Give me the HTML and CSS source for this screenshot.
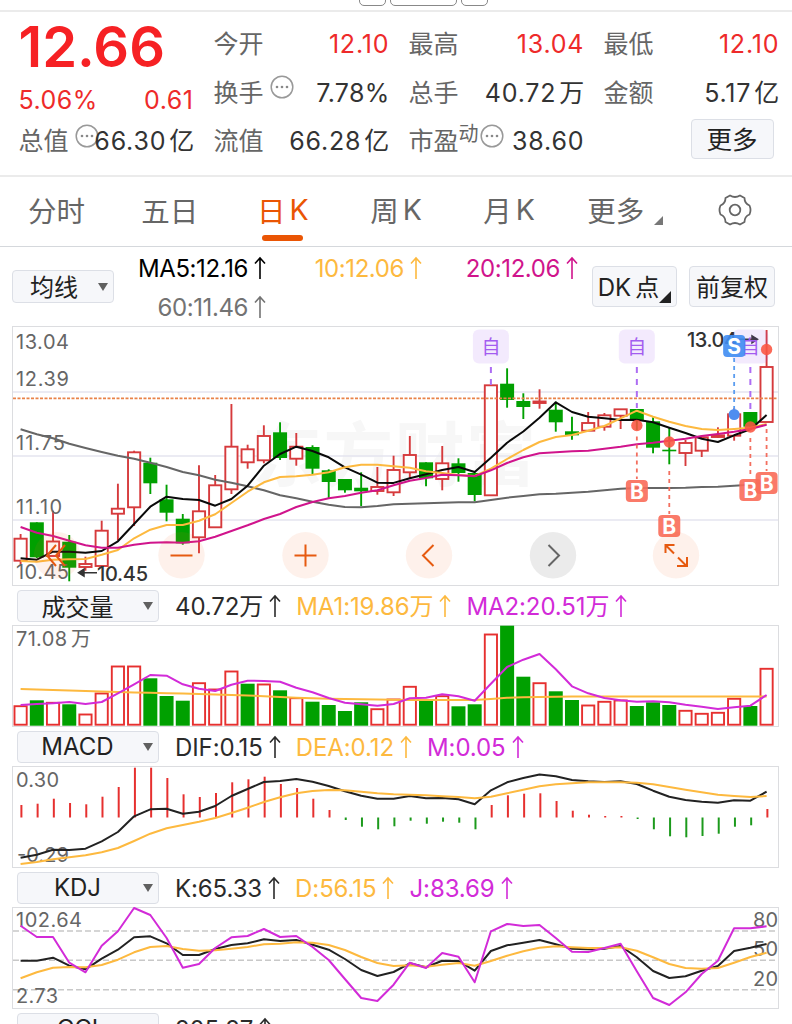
FILE: index.html
```html
<!DOCTYPE html>
<html lang="zh-CN">
<head>
    <meta charset="UTF-8">
    <meta name="viewport" content="width=device-width, initial-scale=1.0">
    <title>日K</title>
    <link rel="stylesheet" href="styles.css">
</head>
<body>
    <svg class="defs" width="0" height="0">
        <symbol id="up" viewBox="0 0 12 24">
            <path d="M6 23V2M1 7.5L6 2l5 5.500" fill="none" stroke="currentColor" stroke-width="1.6"/>
        </symbol>
        <symbol id="more" viewBox="0 0 24 24">
            <circle cx="12" cy="12" r="10.800" fill="none" stroke="#999" stroke-width="1.500"/>
            <circle cx="7" cy="12" r="1.300" fill="#888"/>
            <circle cx="12" cy="12" r="1.300" fill="#888"/>
            <circle cx="17" cy="12" r="1.300" fill="#888"/>
        </symbol>
    </svg>

    <div class="topStrip">
        <span class="chip"></span>
        <span class="chip wide"></span>
        <span class="chip"></span>
    </div>

    <div class="quote">
        <div class="col first">
            <div class="price">12.66</div>
            <div class="row red change"><span>5.06%</span><span>0.61</span></div>
            <div class="row">
                <span class="name">总值<svg class="dots over"><use href="#more"/></svg></span>
                <span class="num">66.30<i>亿</i></span>
            </div>
        </div>
        <div class="col">
            <div class="row"><span class="name">今开</span><span class="num red">12.10</span></div>
            <div class="row">
                <span class="name">换手<svg class="dots"><use href="#more"/></svg></span>
                <span class="num tight">7.78%</span>
            </div>
            <div class="row"><span class="name">流值</span><span class="num">66.28<i>亿</i></span></div>
        </div>
        <div class="col">
            <div class="row"><span class="name">最高</span><span class="num red">13.04</span></div>
            <div class="row"><span class="name">总手</span><span class="num">40.72<i>万</i></span></div>
            <div class="row">
                <span class="name">市盈<small>动</small><svg class="dots pe"><use href="#more"/></svg></span>
                <span class="num">38.60</span>
            </div>
        </div>
        <div class="col">
            <div class="row"><span class="name">最低</span><span class="num red">12.10</span></div>
            <div class="row"><span class="name">金额</span><span class="num">5.17<i>亿</i></span></div>
            <div class="row end"><button class="btn moreBtn">更多</button></div>
        </div>
    </div>

    <div class="tabs">
        <div class="tab">分时</div>
        <div class="tab">五日</div>
        <div class="tab active">日<b>K</b></div>
        <div class="tab">周<b>K</b></div>
        <div class="tab">月<b>K</b></div>
        <div class="tab moreTab">更多<svg class="corner" viewBox="0 0 9 9"><path d="M9 0v9H0z" fill="#777"/></svg></div>
        <div class="tab">
            <svg class="gear" viewBox="0 0 34 32" fill="none" stroke="#666" stroke-width="1.800">
                <path d="M12 1.500Q17 4.500 22 1.500L26.500 4Q26.500 9.500 31.500 11.500Q33.500 16 31.500 20.500Q26.500 22.500 26.500 28L22 30.500Q17 27.500 12 30.500L7.500 28Q7.500 22.500 2.500 20.500Q0.500 16 2.500 11.500Q7.500 9.500 7.500 4Z" stroke-linejoin="round"/>
                <circle cx="17" cy="16" r="5.300"/>
            </svg>
        </div>
    </div>

    <div class="average">
        <button class="btn select maSelect"><span>均线</span><em></em></button>
        <div class="values">
            <span class="black">MA5:12.16<svg class="up"><use href="#up"/></svg></span>
            <span class="orange">10:12.06<svg class="up"><use href="#up"/></svg></span>
            <span class="pink">20:12.06<svg class="up"><use href="#up"/></svg></span>
            <span class="gray">60:11.46<svg class="up"><use href="#up"/></svg></span>
        </div>
        <button class="btn dk"><span>DK<i>点</i></span><svg class="dkCorner" viewBox="0 0 12 12"><path d="M12 0v12H0z" fill="#222"/></svg></button>
        <button class="btn fq"><span>前复权</span></button>
    </div>

    <svg class="chart kline" id="kline" viewBox="12 326 767 260"></svg>

    <div class="legend">
        <button class="btn select"><span>成交量</span><em></em></button>
        <span class="dark">40.72万<svg class="up"><use href="#up"/></svg></span>
        <span class="orange">MA1:19.86万<svg class="up"><use href="#up"/></svg></span>
        <span class="purple">MA2:20.51万<svg class="up"><use href="#up"/></svg></span>
    </div>
    <svg class="chart sub" id="volume" viewBox="12 625 767 102"></svg>

    <div class="legend">
        <button class="btn select"><span>MACD</span><em></em></button>
        <span class="dark">DIF:0.15<svg class="up"><use href="#up"/></svg></span>
        <span class="orange">DEA:0.12<svg class="up"><use href="#up"/></svg></span>
        <span class="purple">M:0.05<svg class="up"><use href="#up"/></svg></span>
    </div>
    <svg class="chart sub" id="macd" viewBox="12 766 767 102"></svg>

    <div class="legend">
        <button class="btn select"><span>KDJ</span><em></em></button>
        <span class="dark">K:65.33<svg class="up"><use href="#up"/></svg></span>
        <span class="orange">D:56.15<svg class="up"><use href="#up"/></svg></span>
        <span class="purple">J:83.69<svg class="up"><use href="#up"/></svg></span>
    </div>
    <svg class="chart sub" id="kdj" viewBox="12 907 767 102"></svg>

    <div class="legend">
        <button class="btn select"><span>CCI</span><em></em></button>
        <span class="dark">205.27<svg class="up"><use href="#up"/></svg></span>
    </div>

    <script src="chart.js"></script>
</body>
</html>
```
FILE: styles.css
```css
* {
    box-sizing: border-box;
}
body {
    margin: 0;
    width: 792px;
    height: 1024px;
    overflow: hidden;
    background: #fff;
    color: #333;
    font-family: Inter, "Noto Sans CJK SC", sans-serif;
    font-size: 25px;
}
i, em {
    font-style: normal;
}
b {
    font-weight: inherit;
}
.defs {
    position: absolute;
}
.red { color: #ee2a2a; }
.black { color: #000; }
.dark { color: #2b2b2b; }
.gray { color: #737373; }
.orange { color: #fdb93f; }
.pink { color: #d0148c; }
.purple { color: #d22bd8; }

.topStrip {
    display: flex;
    gap: 4px;
    height: 12px;
    padding-left: 359px;
    border-bottom: 2px solid #ebebeb;
    overflow: hidden;
}
.chip {
    width: 27px;
    height: 16px;
    margin-top: -10px;
    border: 1px solid #888;
    border-radius: 5px;
}
.chip.wide {
    width: 67px;
}

.quote {
    display: grid;
    grid-template-columns: repeat(4, 175px);
    column-gap: 20px;
    height: 163px;
    padding: 8px 0 0 18.500px;
}
.row {
    display: flex;
    justify-content: space-between;
    align-items: center;
    height: 48.500px;
    line-height: 48px;
    white-space: nowrap;
}
.row i {
    margin-left: 3px;
    letter-spacing: 0;
}
.row.end {
    justify-content: flex-end;
}
.num {
    letter-spacing: 0.8px;
    margin-right: -0.800px;
}
.num.tight {
    letter-spacing: 0.3px;
    margin-right: -1px;
}
.name {
    display: flex;
    color: #666;
    align-items: center;
}
.name small {
    align-self: flex-start;
    font-size: 20px;
    line-height: 34px;
}
.row.change {
    height: 40px;
    padding-top: 5px;
    line-height: 36px;
    letter-spacing: 0.5px;
}
.price {
    height: 57px;
    color: #f62124;
    font-size: 56px;
    font-weight: 600;
    line-height: 55px;
}
.dots {
    width: 24px;
    height: 24px;
    margin: -11px 0 0 6px;
}
.dots.over {
    margin-right: -30px;
}
.dots.pe {
    margin-left: 1px;
}

.btn {
    display: flex;
    flex: none;
    align-items: center;
    justify-content: center;
    padding: 0;
    border: 1px solid #dcdfe6;
    border-radius: 4px;
    background: #f6f7fa;
    color: #222;
    font-family: inherit;
    font-size: 24px;
    white-space: nowrap;
}
.btn span {
    margin-top: -2px;
}
.moreBtn {
    width: 83px;
    height: 40px;
    margin: -5px 5px 0 0;
    padding-bottom: 3px;
    font-size: 25.500px;
}

.tabs {
    display: grid;
    grid-template-columns: repeat(7, 1fr);
    height: 72px;
    border-top: 2px solid #ebebeb;
    border-bottom: 1px solid #d5d8dc;
}
.tab {
    position: relative;
    display: flex;
    align-items: center;
    justify-content: center;
    padding-bottom: 4px;
    color: #666;
    font-size: 28.500px;
}
.tab b {
    margin-left: 4px;
}
.tab.active {
    color: #ea5504;
}
.tab.active::after {
    content: "";
    position: absolute;
    bottom: 5px;
    width: 41px;
    height: 6px;
    border-radius: 3px;
    background: #ea5504;
}
.moreTab {
    padding-left: 6px;
}
.corner {
    width: 9px;
    height: 9px;
    margin: 22px 0 0 10px;
}
.gear {
    width: 34px;
    height: 32px;
}

.average {
    display: flex;
    align-items: flex-start;
    height: 79px;
    padding-left: 12px;
}
.select span {
    flex: 1;
    text-align: center;
    padding-right: 6px;
}
.select em {
    border: 5px solid transparent;
    border-top: 8px solid #606060;
    border-bottom: 0;
    margin-right: 5px;
}
.maSelect {
    width: 102px;
    height: 33px;
    margin-top: 23px;
}
.maSelect span {
    padding-right: 3px;
}
.values {
    display: grid;
    flex: none;
    grid-template-columns: 128px 156px 156px;
    width: 478px;
    padding: 3px 0 0 24px;
    font-size: 24px;
    letter-spacing: -0.400px;
    line-height: 38.500px;
    white-space: nowrap;
    justify-items: end;
}
.up {
    width: 12px;
    height: 24px;
    margin-left: 6px;
    vertical-align: -3px;
}
.dk {
    position: relative;
    width: 85px;
    height: 41px;
    margin-top: 19px;
    padding-right: 12px;
}
.dk i {
    margin-left: 4px;
}
.dkCorner {
    position: absolute;
    right: 5px;
    bottom: 3px;
    width: 12px;
    height: 12px;
}
.fq {
    width: 86px;
    height: 41px;
    margin: 19px 0 0 12px;
}

.chart {
    display: block;
    width: 767px;
    margin-left: 12px;
}
.kline {
    height: 260px;
}
.sub {
    height: 102px;
}
.legend {
    display: flex;
    align-items: flex-start;
    gap: 15px;
    height: 39px;
    padding: 4px 0 0 17px;
    font-size: 24px;
    letter-spacing: -0.100px;
    line-height: 34px;
    white-space: nowrap;
}
.legend .btn {
    width: 142px;
    height: 32px;
    margin-right: 1px;
}
.axis {
    fill: #666;
    font-size: 20px;
}
.note {
    fill: #333;
    font-size: 20px;
    font-weight: 500;
}
.watermark {
    fill: #f7f7f7;
    font-size: 70px;
    font-weight: 700;
}
.own {
    fill: #a35cf0;
    font-size: 19px;
}
.flag {
    fill: #fff;
    font-size: 21px;
    font-weight: 700;
    text-anchor: middle;
}
```
FILE: chart.js
```js
const RED = '#d63a3c', VOL_RED = '#e6302f', GREEN = '#00a000';
const ORANGE = '#fdb93f', PURPLE = '#d22bd8', PINK = '#d0148c';
const x = i => 20.6 + i * 16.217;

// colour, body top, body bottom, high, low
const candles = [
    ['r',538.7,560.7,534,564],['g',522.3,557.3,522.3,558],['r',541.5,556,510.7,556],['g',541.7,567.7,535,581.3],
    ['r',564,567,556.7,570.7],['r',530.7,566,520.7,566],['r',508.7,513.7,483.7,540.3],['r',452.3,507.3,450.7,526],
    ['g',462.7,483.3,457.7,494],['g',499.3,512.7,484.7,521.3],['g',518.7,543.3,514,544.7],['r',511.3,537.3,465.3,553.3],
    ['r',485.3,527.3,475,527.3],['r',446.7,489.3,404,494],['r',449.3,462.3,444.7,468.7],['r',436,460.3,425.3,463.3],
    ['g',432.3,458,422.3,460],['r',446.7,458.7,433,465.7],['g',447,468.7,445.3,474],['g',470.3,482,469.3,498],
    ['g',479,490.3,479,492.7],['g',487.7,491.3,472.3,506],['r',487,491,467,494.7],['r',470,492.3,455.7,496],
    ['r',455,472.3,436,478],['g',462.3,478.3,462.3,486.3],['r',463.3,479,446,490.3],['g',463.3,473,458.3,481.7],
    ['g',473,495,472.3,501.3],['r',385.3,495.3,385.3,495.3],['g',383.7,400,368.3,407.7],['g',401,407,393.3,419],
    ['r',401.500,403,389.3,408.7],['g',409.7,422.3,401.7,431.7],['g',431.3,435.3,416.7,439.7],['r',423,430.7,412,430.7],
    ['r',415.3,426.7,413,430.7],['r',409.3,415.7,409.3,429],['g',409,420,409,430],['g',421.3,447.7,417.3,453.3],
    ['g',449.7,451.3,427.7,464.3],['r',443,453,440,466],['r',437.3,450.7,437.3,457],['r',435.3,437,427.3,438],
    ['r',414.3,435.7,408,440.7],['g',412,426.7,412,426.7],['r',367,422,330,422]
];
const ma5 = [558.3,559.7,551.7,551.7,552.7,551,541.3,524,506.7,496.7,499,500,505.7,499,485.7,465.7,454,446.7,451,457.3,467.3,474.7,482.7,482.9,478.3,474.3,470,467,472,457.7,442.7,431.5,417.7,402.3,412,416.7,418.3,420,419.7,422.3,427.7,433,438.7,442,435.3,429.3,415];
const ma10 = [561,561.7,559.7,559.3,559,554.7,550,538.3,529.7,525,525,520.7,514.3,503,491.7,482.3,477,476.3,474.7,472.3,467.3,464.7,464.7,466.3,467.7,471.3,473,475,476,468.7,459,450,442,437,435,430.7,426,418.3,410.7,416.7,421.7,426,429,430,429,427.7,424];
const ma20 = [527,532.7,536,540.7,545.3,547.7,547.7,544.7,542.7,542.3,542.7,541.3,536.7,531,525.3,519,514,507,502,498.3,496,492.7,490.3,485.3,480.7,478,474.7,475.3,476.3,470.3,463,457.3,453.3,452.3,451.3,450.7,448.7,446.7,444.3,442.7,440.7,438.7,436,434,431.7,429,424.7];
const ma60 = [429.3,434.3,438.3,443.7,448,452,455.7,458.7,462.7,467,472,475.3,479.7,482.7,486.3,490.3,495.3,498.3,501.7,504.7,507,507.3,506,504.3,503.7,503.3,502.7,502.3,502.3,500,497.7,496,494.3,493.7,492.7,491.7,490.3,488.7,488,488,488,487.7,487,486.7,485.7,484.7,482];

const volColors = 'rgrgrrrrgggrrrgrgrggggrrrgrggrggrggrrrgggrrrrgr';
const vol = [705.7,700.3,702.3,704.3,714,693,666,666,678.3,696,700.7,682.7,689,671,683.7,684,690.3,697.7,701.7,705,711,702.3,708.7,699,686.3,700.3,695.7,706.3,704.3,634,625.7,676.7,682.7,691.3,700,705,701.3,700,706,702.3,705,710.3,713.3,712.3,698.3,706,668.3];
const volMa2 = [705,704,703.3,702,704,702,693.3,684.3,675,675.7,684.3,688.7,691,684.7,680.7,681,681.7,687.7,692.3,698,702.7,704.3,705.7,704,698.3,697.7,694.3,696.3,700.7,683.7,667,659.7,654,669.3,686.3,693.3,698,700.3,701.7,701.3,702.3,704.7,706.7,709,707.3,705.7,695];
const volMa1 = [689,689.5,690,690.5,691,691.5,692,692.4,692.8,693.2,693.6,694,694.5,695,695.5,696.2,697,697.7,698.3,698.7,699,699.2,699.5,699.8,700,700,700,700,700,699,697.7,697.3,697,696.7,696.5,696.5,696.5,696.5,696.5,696.5,696.5,696.5,696.5,696.5,696.5,696.5,696.5];

const bars = [805,803.7,798.7,803,804.3,796.7,787,767.7,767.7,778,794.3,797,793,782.3,779.3,776.7,784,788,798.7,810,820,826.7,829.3,826.3,820.7,823.7,821.7,822.7,829.3,805,795.3,793.7,793.3,801,810.7,814.7,816,816,819,829.3,836.3,837.3,836,833.7,826.7,825.3,809];
const dif = [857.7,854.7,849.7,850,848.7,841.3,832,816.3,809.3,808.7,813.7,811.7,806,796,789,782,781,779,781.7,786,791.3,795.7,798.7,798.7,796,798.3,798,799.3,804.3,790.3,782.3,778,774.5,776.3,780,781.3,782,781.3,784,790.7,796.7,800,801.7,802.7,800.3,800.7,791.7];
const dea = [864,862,859.3,857.3,855.3,852.3,848,841,833.7,828.3,825,821.7,818,813,807.7,802,797.3,793.3,791,790,790.3,791.7,793.3,794.3,794.7,795.3,796.3,797,798.3,796.7,793.3,789.7,786.3,784.3,783.3,782.3,782.3,782.3,782.7,784.3,787,789.7,792.3,794.7,796,797,796];

const k = [960.7,960.7,957.7,965.7,969.3,958.7,949.7,937.3,936.3,943.3,955,955,949,945,943.3,939.3,941,940,944.7,949.7,959,970,976,972,963.3,967.3,960.7,961,970.7,951,945.3,942.7,940,944.3,948.7,949.3,948.7,946,957.3,971,978,976.3,970.7,966,951,947.7,944];
const d = [978.3,972.3,967.7,967,967.3,965,959.7,952.3,947,946,949,950.7,950.3,948.7,947,944.3,943.7,942.3,942.7,945,950,957,963,966,965.3,966.7,964.7,963,965.7,961,955.7,951.3,947.7,946.3,947.3,948,948,947.3,950.7,957.3,964,968,968.7,968,962.7,957,952.7];
const j = [925.7,937,937,962.7,972.3,945.7,931.3,908,915,938,967.7,964,948,937.3,936,929,937,936,947,960,979,998,1001,984.7,962.7,968,953,956.7,982.3,931.3,924,926,925,938,951.7,952,948,943.7,971.3,998,1005,992.3,974,960.7,928.3,928.3,926.3];

const curve = (ys, color, w = 2) =>
    `<polyline points="${ys.map((y, i) => x(i).toFixed(1) + ',' + y).join(' ')}" fill="none" stroke="${color}" stroke-width="${w}" stroke-linejoin="round"/>`;
const line = (x1, y1, x2, y2, color, w = 1, dash = '') =>
    `<line x1="${x1}" y1="${y1}" x2="${x2}" y2="${y2}" stroke="${color}" stroke-width="${w}" stroke-dasharray="${dash}"/>`;
const text = (tx, ty, s, len, cls = 'axis') =>
    `<text x="${tx}" y="${ty}" class="${cls}"${len ? ` textLength="${len}"` : ''}>${s}</text>`;
const frame = (y, h) =>
    `<rect x="12.5" y="${y + 0.5}" width="766" height="${h - 1}" fill="none" stroke="#dcdde0"/>`;

function box(i, top, bottom, color, red) {
    if (!red) return `<rect x="${x(i) - 7}" y="${top}" width="14" height="${bottom - top}" fill="${color}"/>`;
    return `<rect x="${x(i) - 6.1}" y="${top}" width="12.2" height="${Math.max(bottom - top, 1)}" fill="#fff" stroke="${color}" stroke-width="1.9"/>`;
}

function drawKline() {
    let s = text(252, 481, '东方财富', 284, 'watermark') + frame(326, 260);
    [392, 456, 520].forEach(y => s += line(13, y, 778, y, '#e4e5ef', 1.6));
    s += text(16, 349, '13.04', 53) + text(16, 385.5, '12.39', 53);
    candles.forEach(([c, top, bottom, high, low], i) => {
        const color = c === 'r' ? RED : GREEN;
        s += line(x(i), high, x(i), low, color, 1.9) + box(i, top, bottom, color, c === 'r');
    });
    s += line(13, 398.3, 778, 398.3, '#e98349', 1.7, '3 1.5');
    s += text(16, 449.5, '11.75', 49) + text(16, 513.5, '11.10', 46) + text(16, 578.5, '10.45', 53);
    s += curve(ma60, '#666') + curve(ma5, '#0a0a0a') + curve(ma10, ORANGE) + curve(ma20, PINK);
    s += `<path d="M97 572.7H79m5 -3.500l-5.500 3.500l5.500 3.500z" fill="#333" stroke="#333" stroke-width="1.500"/>` + text(97, 580.5, '10.45', 51, 'note');
    s += text(687, 347, '13.04', 50, 'note') + `<path d="M739 339.300H757m-5 -3.500l5.500 3.500l-5.500 3.500z" fill="#333" stroke="#333" stroke-width="1.500"/>`;

    [[29, 386], [38, 408], [45, 412]].forEach(([i, end]) => {
        s += `<rect x="${x(i) - 18}" y="329.5" width="36" height="34" rx="6" fill="#a35cf0" fill-opacity=".13"/>`;
        s += text(x(i) - 9.5, 354, '自', 0, 'own') + line(x(i), 367, x(i), end, '#ad6df3', 2, '6 6');
    });
    // trade points
    s += line(x(44), 358, x(44), 410, '#5a9df0', 1.8, '4 4') + `<circle cx="${x(44)}" cy="414.5" r="5.500" fill="#4f8df0"/>`;
    s += flag(x(44), 346, 'S', '#3f8cf2');
    [[38, 425.5, 491], [40, 442, 526], [45, 427, 490], [46, 349.5, 483]].forEach(([i, dot, y]) => {
        s += line(x(i), i === 46 ? 429 : dot + (i === 40 ? 29 : 11), x(i), y - 12, '#f36f5f', 1.8, '4 4');
        s += `<circle cx="${x(i)}" cy="${dot}" r="5.700" fill="#fa5440" fill-opacity=".88"/>` + flag(x(i), y, 'B', '#f96c59');
    });

    // toolbar buttons over the chart
    const icons = [
        [57, 'M56 545l-9 10.500l9 10.500M65 545l-9 10.500l9 10.500'],
        [181.5, 'M170.500 555.500h22'],
        [305.5, 'M294.500 555.500h22M305.500 544.500v22'],
        [429, 'M433.500 545l-10.500 10.500l10.500 10.500'],
        [553, 'M548.500 545l10.500 10.500l-10.500 10.500'],
        [676, 'M665.500 553v-8h9M666 545.500l8 8M687 557v9h-10M678 557.500l8.500 8.500']
    ];
    icons.forEach(([cx, path], n) => {
        const gray = n === 4;
        s += `<circle cx="${cx}" cy="555.3" r="23.2" fill="${gray ? '#ebebeb' : '#f06420'}" fill-opacity="${gray ? 1 : 0.09}"/>`;
        s += `<path d="${path}" fill="none" stroke="${gray ? '#666' : '#e65a10'}" stroke-width="2"/>`;
    });
    document.getElementById('kline').innerHTML = s;
}

function flag(cx, cy, letter, color) {
    return `<rect x="${cx - 11}" y="${cy - 11}" width="22" height="22" rx="4" fill="${color}" fill-opacity=".9"/>` +
        `<text x="${cx}" y="${cy + 7.5}" class="flag">${letter}</text>`;
}

function drawVolume() {
    let s = frame(625, 102) + text(16, 645.5, '71.08', 51) + text(71, 645.5, '万');
    vol.forEach((y, i) => {
        const red = volColors[i] === 'r';
        s += box(i, red ? y + 0.5 : y, red ? 724.7 : 725.7, red ? VOL_RED : GREEN, red);
    });
    document.getElementById('volume').innerHTML = s + curve(volMa1, ORANGE) + curve(volMa2, PURPLE);
}

function drawMacd() {
    let s = frame(766, 102) + text(16, 786.5, '0.30', 43);
    bars.forEach((y, i) => s += line(x(i) + 0.8, y, x(i) + 0.8, 817.5, y < 817.5 ? VOL_RED : '#1c9a1c', 2));
    s += text(17, 862, '-0.29', 52);
    document.getElementById('macd').innerHTML = s + curve(dif, '#222') + curve(dea, ORANGE);
}

function drawKdj() {
    let s = frame(907, 102);
    [931, 960.3, 989.7].forEach(y => s += line(13, y, 778, y, '#c8c8c8', 1.4, '6 3'));
    s += text(16, 927, '102.64', 66) + text(16, 1003, '2.73', 42);
    s += text(753, 927, '80', 25) + text(753, 955.5, '50', 25) + text(753, 985.5, '20', 25);
    document.getElementById('kdj').innerHTML = s + curve(k, '#222') + curve(d, ORANGE) + curve(j, PURPLE);
}

drawKline();
drawVolume();
drawMacd();
drawKdj();
```
